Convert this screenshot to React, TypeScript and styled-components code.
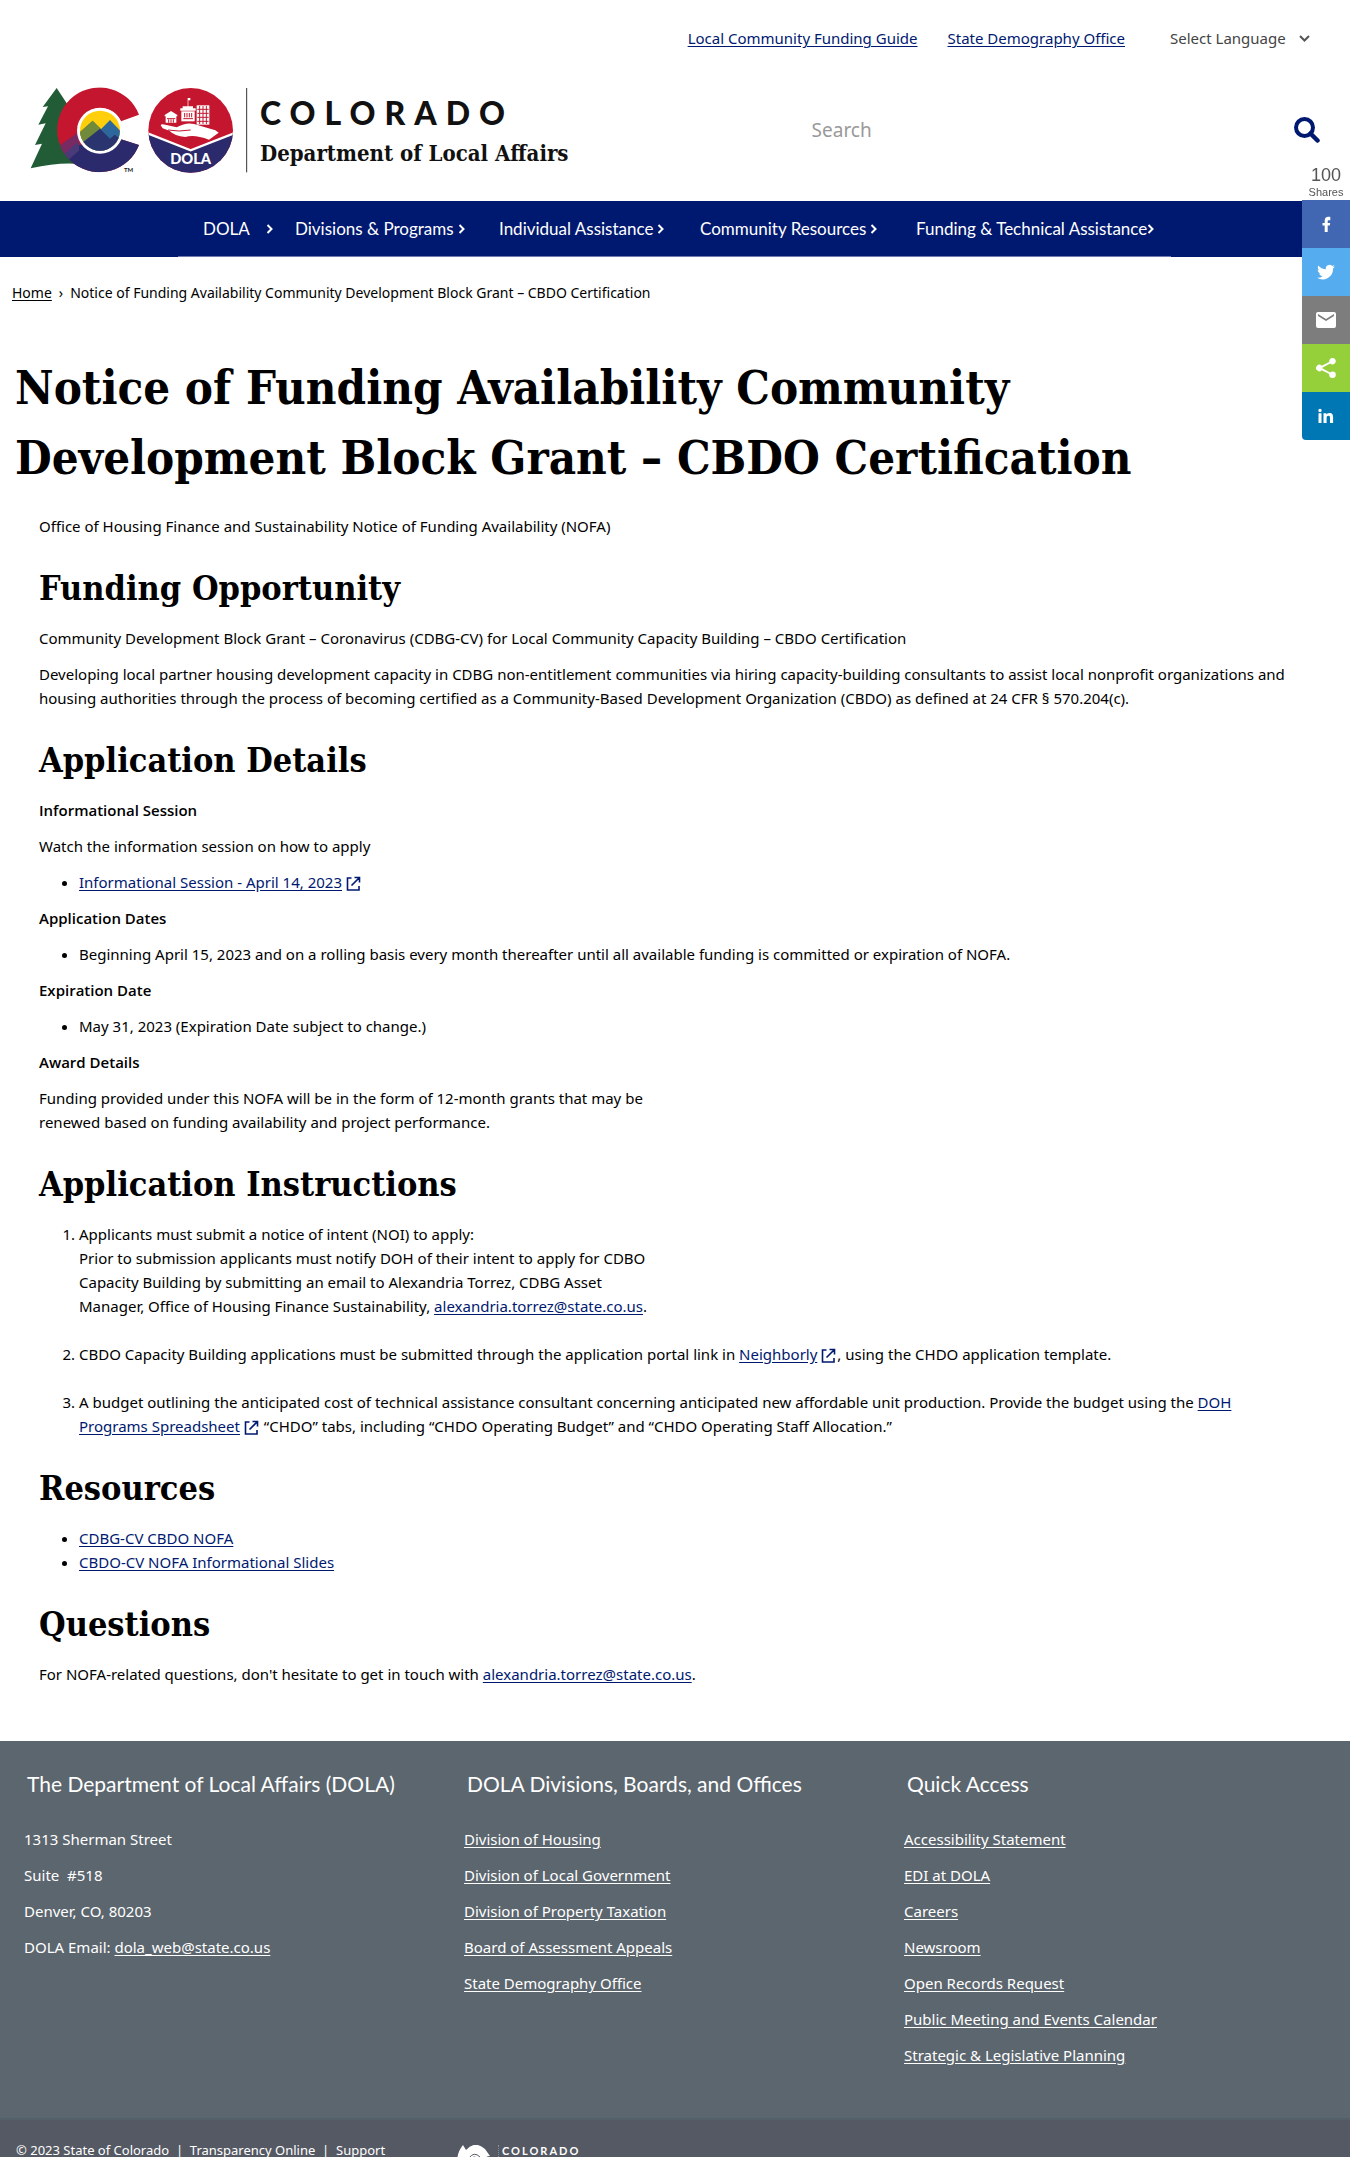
import React from "react";
import styled, { createGlobalStyle } from "styled-components";

const navy = "#001970";
const sans = '"Noto Sans", "Open Sans", sans-serif';
const display = 'Lato, "Noto Sans", sans-serif';
const slab = '"DejaVu Serif Condensed", "DejaVu Serif", serif';

const GlobalStyle = createGlobalStyle`
  *, *::before, *::after { box-sizing: border-box; }
  body {
    margin: 0;
    background: #fff;
    color: #000;
    font: 15px/24px ${sans};
  }
`;

const Link = styled.a`
  color: ${navy};
  text-decoration: underline;
  text-underline-offset: 2px;
`;

/* ---------- header ---------- */

const TopBar = styled.div`
  display: flex;
  justify-content: flex-end;
  align-items: center;
  gap: 30px;
  padding: 26px 40px 0 24px;
`;

const Language = styled.div`
  display: flex;
  align-items: center;
  margin-left: 15px;
  color: #444;
`;

const LanguageSelect = styled.select`
  appearance: none;
  border: 0;
  padding: 0;
  width: 129px;
  background: transparent;
  color: inherit;
  font: inherit;
`;

const Masthead = styled.div`
  display: grid;
  grid-template-columns: 3fr 2fr;
  align-items: center;
  padding: 30px 30px 21px 24px;
`;

const Brand = styled.a`
  display: flex;
  align-items: center;
  color: #111;
  text-decoration: none;
`;

const BrandText = styled.span`
  display: flex;
  flex-direction: column;
  gap: 2px;
  margin-left: 6px;
  padding-top: 4px;
`;

const StateName = styled.span`
  font: 900 32px/40px ${display};
  letter-spacing: 9px;
`;

const DepartmentName = styled.span`
  font: 700 22px/36px ${slab};
  white-space: nowrap;
`;

const SearchForm = styled.form`
  display: flex;
  align-items: center;
`;

const SearchInput = styled.input`
  flex: 1;
  min-width: 0;
  border: 0;
  padding: 0 0 0 10px;
  background: transparent;
  font: 19px/28px ${sans};
  color: #333;
  &::placeholder { color: #999; opacity: 1; }
`;

const SearchButton = styled.button`
  border: 0;
  padding: 0;
  background: transparent;
  display: flex;
`;

/* ---------- navigation ---------- */

const NavBar = styled.nav`
  background: ${navy};
  padding-left: 178px;
`;

const NavList = styled.ul`
  display: grid;
  grid-template-columns: 92px 204px 201px 216px auto;
  width: 993px;
  max-width: 100%;
  height: 56px;
  margin: 0;
  padding: 0 20px 0 25px;
  list-style: none;
  align-items: center;
  border-bottom: 1px solid #6e7bab;
`;

const NavButton = styled.button<{ $gap: number }>`
  display: flex;
  align-items: center;
  gap: ${({ $gap }) => $gap}px;
  border: 0;
  padding: 0;
  background: transparent;
  color: #fff;
  font: 17px/24px ${display};
  white-space: nowrap;
`;

/* ---------- content ---------- */

const Breadcrumb = styled.nav`
  display: flex;
  gap: 7px;
  padding: 24px 12px 0;
  font-size: 14px;
  a { color: #000; }
`;

const Title = styled.h1`
  margin: 48px 0 0;
  padding: 0 180px 0 15px;
  font: 700 47px/70px ${slab};
`;

const Article = styled.main`
  padding: 21px 38px 43px 39px;
  p { margin: 0 0 12px; }
  ul, ol { margin: 0 0 12px; padding-left: 40px; }
`;

const SectionTitle = styled.h2`
  margin: 24px 0 12px;
  font: 700 34px/52px ${slab};
`;

const Strong = styled.strong`
  font-weight: 600;
  font-family: "Open Sans", sans-serif;
`;

const Steps = styled.ol`
  li + li { margin-top: 24px; }
`;

const ExtIcon = styled.svg`
  margin: 0 1px 0 4px;
  vertical-align: -3px;
`;

/* ---------- footer ---------- */

const FooterMain = styled.div`
  display: grid;
  grid-template-columns: repeat(3, 440px);
  min-height: 377px;
  padding: 24px 0 0 24px;
  background: #5c666e;
  color: #fff;
`;

const FooterTitle = styled.h3`
  margin: 0 0 24px;
  padding-left: 3px;
  font: 400 21px/38px ${display};
`;

const FooterList = styled.ul`
  margin: 0;
  padding: 0;
  list-style: none;
  white-space: pre-wrap;
  li + li { margin-top: 12px; }
  a { color: #fff; }
`;

const FooterBar = styled.div`
  display: flex;
  height: 39px;
  padding: 22px 16px 0;
  overflow: hidden;
  border-top: 2px solid #53606a;
  background: #555963;
  color: #fff;
  font-size: 13px;
  line-height: 16px;
  a { color: #fff; }
`;

const Legal = styled.div`
  flex: 0 0 441px;
  white-space: pre;
`;

const StateMark = styled.div`
  display: flex;
  gap: 7px;
  padding-top: 3px;
`;

const StateMarkText = styled.span`
  border-left: 1px dotted #888d96;
  padding-left: 3px;
  height: 12px;
  font: 700 11px/12px ${display};
  letter-spacing: 2px;
`;

/* ---------- share rail ---------- */

const ShareRail = styled.aside`
  position: fixed;
  top: 165px;
  right: 0;
  width: 48px;
  display: flex;
  flex-direction: column;
  color: #555;
  font-family: "Liberation Sans", sans-serif;
  text-align: center;
`;

const ShareCount = styled.div`
  font-size: 18px;
  line-height: 20px;
`;

const ShareLabel = styled.div`
  font-size: 11px;
  line-height: 15px;
`;

const ShareButton = styled.button<{ $color: string }>`
  display: flex;
  align-items: center;
  justify-content: center;
  height: 48px;
  border: 0;
  padding: 0;
  background: ${({ $color }) => $color};
  &:last-child { border-bottom-left-radius: 4px; }
`;

/* ---------- drawings ---------- */

const Chevron = () => (
  <svg width="7" height="10" viewBox="0 0 7 10" fill="none" stroke="#fff" strokeWidth="2" aria-hidden="true">
    <path d="M1.5 1l4 4-4 4" />
  </svg>
);

const External = () => (
  <ExtIcon width="15" height="15" viewBox="0 0 15 15" fill="none" stroke={navy} strokeWidth="1.6" aria-hidden="true">
    <path d="M5.500 2H1.500v12h11.500v-4M8.500 1.500H13.500V6.500M13 2L5.500 9.500" />
  </ExtIcon>
);

const Emblem = () => (
  <svg width="230" height="100" viewBox="0 0 690 300" role="img" aria-label="State of Colorado, DOLA">
    <defs>
      <clipPath id="c-shape">
        <path d="M345 104A127 127 0 1 0 345 195L291 178A67 67 0 1 1 291 124Z" />
      </clipPath>
      <clipPath id="c-core"><circle cx="228" cy="152" r="60" /></clipPath>
      <clipPath id="badge"><circle cx="500" cy="151" r="127" /></clipPath>
    </defs>
    <path fill="#215c36" d="M98 24L145 95L190 255Q120 242 20 265L54 191L33 195L65 130L43 134L72 79L56 81Z" />
    <g clipPath="url(#c-shape)">
      <rect x="90" y="20" width="270" height="270" fill="#c4172f" />
      <path fill="#2a2a6c" d="M90 252L165 195L290 170H360V290H90Z" />
      <path fill="#782a62" d="M80 215L165 155V195L118 240Z" />
      <path fill="#4a3a78" d="M118 224L165 184V212L130 242Z" />
    </g>
    <circle cx="228" cy="152" r="69" fill="#fff" />
    <g clipPath="url(#c-core)">
      <rect x="160" y="90" width="140" height="130" fill="#fecf0a" />
      <path fill="#70893a" d="M150 172L206 122L245 160L200 215H150Z" />
      <path fill="#2d679c" d="M150 230L258 120L310 175V230Z" />
      <path fill="#70893a" d="M150 172L206 122L228 146L160 205Z" />
      <path fill="#2a3570" d="M160 200L228 146L258 176L272 164L300 184V230H160Z" />
    </g>
    <text x="300" y="277" fontFamily="Lato, sans-serif" fontWeight="700" fontSize="18" fill="#222">TM</text>
    <g clipPath="url(#badge)">
      <rect x="370" y="20" width="260" height="260" fill="#c4172f" />
      <path fill="#2a2a6c" d="M370 160L500 214L630 160V290H370Z" />
      <path fill="none" stroke="#fff" strokeWidth="7" d="M370 160L500 211L630 160" />
    </g>
    <g fill="#fff">
      <path d="M410 136Q412 130 424 134L458 142Q486 126 510 132L574 151L584 158L555 179Q510 162 484 171Q452 168 436 152L416 145Z" />
      <path d="M422 105L441 93L460 105V109H457V128H425V109H422Z" />
      <path d="M469 85H476V79H491V54H499V61H493V79H507V85H515V92H469Z" />
      <path d="M472 94H512V124H472Z" />
      <path d="M518 76H556V134H518Z" />
    </g>
    <g fill="none" stroke="#c4172f" strokeWidth="3">
      <path d="M429 116H454M434 118V128M441 118V128M448 118V128M482 99V112M489 99V112M496 99V112M503 99V112M478 116H507" />
      <path d="M520 88H554M520 100H554M520 112H554M520 124H554M527 78V132M537 78V132M547 78V132" />
      <path d="M432 150Q465 156 500 150" />
    </g>
    <text x="500" y="251" textAnchor="middle" fontFamily="Lato, sans-serif" fontWeight="900" fontSize="44" fill="#fff">DOLA</text>
    <path stroke="#333" strokeWidth="3" d="M668 24V277" />
  </svg>
);

const navItems = [
  { label: "DOLA", gap: 16 },
  { label: "Divisions & Programs", gap: 4 },
  { label: "Individual Assistance", gap: 4 },
  { label: "Community Resources", gap: 4 },
  { label: "Funding & Technical Assistance", gap: 0 },
];

const divisions = [
  "Division of Housing",
  "Division of Local Government",
  "Division of Property Taxation",
  "Board of Assessment Appeals",
  "State Demography Office",
];

const quickAccess = [
  "Accessibility Statement",
  "EDI at DOLA",
  "Careers",
  "Newsroom",
  "Open Records Request",
  "Public Meeting and Events Calendar",
  "Strategic & Legislative Planning",
];

const shares = [
  { name: "Facebook", color: "#4267b2", d: "M16.300 8.200h-1.600c-.7 0-1 .4-1 1v1.700h2.500l-.4 2.600h-2.100V20h-3v-6.500H8.500v-2.600h2.200V8.800c0-2.600 1.300-4 3.600-4 .9 0 1.500.1 2 .2z" },
  { name: "Twitter", color: "#55acee", d: "M21 6.400c-.7.300-1.400.5-2.100.6.800-.5 1.300-1.200 1.600-2-.7.400-1.500.7-2.300.9a3.700 3.700 0 0 0-6.300 3.400C8.800 9.100 6.100 7.700 4.300 5.400c-1 1.700-.5 3.900 1.100 4.900-.6 0-1.200-.2-1.700-.5 0 1.800 1.300 3.300 3 3.700-.5.100-1.100.2-1.700.1.500 1.500 1.800 2.500 3.500 2.600A7.400 7.400 0 0 1 3 17.700a10.500 10.500 0 0 0 16.100-9.300c.7-.5 1.400-1.200 1.900-2z" },
  { name: "Email", color: "#7d7d7d", d: "M4 4h16a2 2 0 0 1 2 2v12a2 2 0 0 1-2 2H4a2 2 0 0 1-2-2V6c0-1.100.9-2 2-2zm0 2v2l8 5 8-5V6l-8 5z" },
  { name: "ShareThis", color: "#95d03a", d: "M18.500 15.500c-.9 0-1.700.4-2.300.9L8.600 12.500v-1l7.600-3.900a3.300 3.300 0 1 0-1-2.400v.7L7.700 9.700a3.300 3.300 0 1 0 0 4.600l7.500 3.800v.7a3.300 3.300 0 1 0 3.300-3.300z" },
  { name: "LinkedIn", color: "#0077b5", d: "M4.500 9.300h3V19h-3zM6 4.800a1.700 1.700 0 1 1 0 3.400 1.700 1.700 0 0 1 0-3.400zM9.500 9.300h2.900v1.400c.4-.8 1.400-1.600 3-1.600 3.100 0 3.700 2 3.700 4.600V19H16v-4.700c0-1.200 0-2.600-1.600-2.600s-1.800 1.200-1.800 2.500V19H9.500z" },
];

export default function App() {
  return (
    <>
      <GlobalStyle />
      <header>
        <TopBar>
          <Link href="#">Local Community Funding Guide</Link>
          <Link href="#">State Demography Office</Link>
          <Language>
            <LanguageSelect aria-label="Language" defaultValue="Select Language">
              <option>Select Language</option>
            </LanguageSelect>
            <svg width="11" height="7" viewBox="0 0 11 7" fill="none" stroke="#555" strokeWidth="2" aria-hidden="true">
              <path d="M1 1l4.500 4.500L10 1" />
            </svg>
          </Language>
        </TopBar>
        <Masthead>
          <Brand href="#">
            <Emblem />
            <BrandText>
              <StateName>COLORADO</StateName>
              <DepartmentName>Department of Local Affairs</DepartmentName>
            </BrandText>
          </Brand>
          <SearchForm role="search">
            <SearchInput type="search" placeholder="Search" aria-label="Search" />
            <SearchButton type="button" aria-label="Submit search">
              <svg width="26" height="26" viewBox="0 0 26 26" fill="none" stroke={navy} aria-hidden="true">
                <circle cx="10.500" cy="10.500" r="8.500" strokeWidth="4" />
                <path d="M16.500 16.500l7 7" strokeWidth="4.500" strokeLinecap="round" />
              </svg>
            </SearchButton>
          </SearchForm>
        </Masthead>
        <NavBar aria-label="Main">
          <NavList>
            {navItems.map((item) => (
              <li key={item.label}>
                <NavButton $gap={item.gap}>
                  {item.label}
                  <Chevron />
                </NavButton>
              </li>
            ))}
          </NavList>
        </NavBar>
      </header>

      <Breadcrumb aria-label="Breadcrumb">
        <Link href="#">Home</Link>
        <span>›</span>
        <span>Notice of Funding Availability Community Development Block Grant – CBDO Certification</span>
      </Breadcrumb>
      <Title>Notice of Funding Availability Community Development Block Grant – CBDO Certification</Title>

      <Article>
        <p>Office of Housing Finance and Sustainability Notice of Funding Availability (NOFA)</p>

        <SectionTitle>Funding Opportunity</SectionTitle>
        <p>Community Development Block Grant – Coronavirus (CDBG-CV) for Local Community Capacity Building – CBDO Certification</p>
        <p>
          Developing local partner housing development capacity in CDBG non-entitlement communities via hiring
          capacity-building consultants to assist local nonprofit organizations and<br />
          housing authorities through the process of becoming certified as a Community-Based Development Organization
          (CBDO) as defined at 24 CFR § 570.204(c).
        </p>

        <SectionTitle>Application Details</SectionTitle>
        <p><Strong>Informational Session</Strong></p>
        <p>Watch the information session on how to apply</p>
        <ul>
          <li><Link href="#">Informational Session - April 14, 2023</Link><External /></li>
        </ul>
        <p><Strong>Application Dates</Strong></p>
        <ul>
          <li>Beginning April 15, 2023 and on a rolling basis every month thereafter until all available funding is committed or expiration of NOFA.</li>
        </ul>
        <p><Strong>Expiration Date</Strong></p>
        <ul>
          <li>May 31, 2023 (Expiration Date subject to change.)</li>
        </ul>
        <p><Strong>Award Details</Strong></p>
        <p>
          Funding provided under this NOFA will be in the form of 12-month grants that may be<br />
          renewed based on funding availability and project performance.
        </p>

        <SectionTitle>Application Instructions</SectionTitle>
        <Steps>
          <li>
            Applicants must submit a notice of intent (NOI) to apply:<br />
            Prior to submission applicants must notify DOH of their intent to apply for CDBO<br />
            Capacity Building by submitting an email to Alexandria Torrez, CDBG Asset<br />
            Manager, Office of Housing Finance Sustainability, <Link href="#">alexandria.torrez@state.co.us</Link>.
          </li>
          <li>
            CBDO Capacity Building applications must be submitted through the application portal link in{" "}
            <Link href="#">Neighborly</Link><External />, using the CHDO application template.
          </li>
          <li>
            A budget outlining the anticipated cost of technical assistance consultant concerning anticipated new
            affordable unit production. Provide the budget using the{" "}
            <Link href="#">DOH<br />Programs Spreadsheet</Link><External /> “CHDO” tabs, including “CHDO Operating Budget” and
            “CHDO Operating Staff Allocation.”
          </li>
        </Steps>

        <SectionTitle>Resources</SectionTitle>
        <ul>
          <li><Link href="#">CDBG-CV CBDO NOFA</Link></li>
          <li><Link href="#">CBDO-CV NOFA Informational Slides</Link></li>
        </ul>

        <SectionTitle>Questions</SectionTitle>
        <p>
          For NOFA-related questions, don't hesitate to get in touch with{" "}
          <Link href="#">alexandria.torrez@state.co.us</Link>.
        </p>
      </Article>

      <footer>
        <FooterMain>
          <section>
            <FooterTitle>The Department of Local Affairs (DOLA)</FooterTitle>
            <FooterList>
              <li>1313 Sherman Street</li>
              <li>{"Suite  #518"}</li>
              <li>Denver, CO, 80203</li>
              <li>DOLA Email: <Link href="#">dola_web@state.co.us</Link></li>
            </FooterList>
          </section>
          <section>
            <FooterTitle>DOLA Divisions, Boards, and Offices</FooterTitle>
            <FooterList>
              {divisions.map((name) => (
                <li key={name}><Link href="#">{name}</Link></li>
              ))}
            </FooterList>
          </section>
          <section>
            <FooterTitle>Quick Access</FooterTitle>
            <FooterList>
              {quickAccess.map((name) => (
                <li key={name}><Link href="#">{name}</Link></li>
              ))}
            </FooterList>
          </section>
        </FooterMain>
        <FooterBar>
          <Legal>
            {"© 2023 State of Colorado  |  "}
            <Link href="#">Transparency Online</Link>
            {"  |  "}
            <Link href="#">Support</Link>
          </Legal>
          <StateMark>
            <svg width="34" height="34" viewBox="0 0 34 34" aria-hidden="true">
              <path fill="#fff" d="M6 0L9 5Q18-5 28 4L33 11Q24 12 24 22Q18 10 10 22L1 22Q-2 10 6 0Z" />
              <path fill="none" stroke="#555963" d="M12 13Q17 6 23 12M14 14Q17 10 21 14" />
            </svg>
            <StateMarkText>COLORADO</StateMarkText>
          </StateMark>
        </FooterBar>
      </footer>

      <ShareRail aria-label="Share">
        <ShareCount>100</ShareCount>
        <ShareLabel>Shares</ShareLabel>
        {shares.map((item) => (
          <ShareButton key={item.name} $color={item.color} aria-label={item.name}>
            <svg width="24" height="24" viewBox="0 0 24 24" fill="#fff" aria-hidden="true">
              <path d={item.d} fillRule="evenodd" />
            </svg>
          </ShareButton>
        ))}
      </ShareRail>
    </>
  );
}
